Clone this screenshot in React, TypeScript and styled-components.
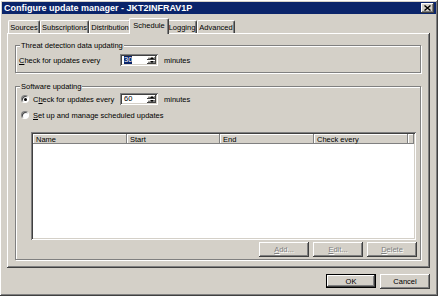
import React from "react";
import styled, { createGlobalStyle } from "styled-components";

const Global = createGlobalStyle`
  html, body { margin: 0; padding: 0; background: #d4d0c8; }
  body { font-family: "Liberation Sans", Arial, sans-serif; font-size: 7.5px; color: #000; }
`;

const raised = `
  box-shadow: inset -1px -1px 0 #404040, inset 1px 1px 0 #ffffff,
    inset -2px -2px 0 #808080, inset 2px 2px 0 #d4d0c8;
`;
const sunken = `
  box-shadow: inset 1px 1px 0 #808080, inset -1px -1px 0 #ffffff,
    inset 2px 2px 0 #404040, inset -2px -2px 0 #d4d0c8;
`;

const Window = styled.div`
  width: 438px;
  height: 296px;
  box-sizing: border-box;
  padding: 2px;
  background: #d4d0c8;
  display: flex;
  flex-direction: column;
  ${raised}
`;

const TitleBar = styled.div`
  height: 12px;
  background: #0a246a;
  display: flex;
  align-items: center;
  justify-content: space-between;
  padding: 0 2px 0 2px;
`;

const Title = styled.span`
  color: #fff;
  font-weight: bold;
  font-size: 9px;
  letter-spacing: 0px;
  white-space: nowrap;
`;

const CloseBox = styled.div`
  width: 13px;
  height: 10px;
  background: #d4d0c8;
  display: flex;
  align-items: center;
  justify-content: center;
  ${raised}
`;

const Body = styled.div`
  flex: 1;
  display: flex;
  flex-direction: column;
  padding: 4px 6px 0 5px;
`;

const TabStrip = styled.div`
  display: flex;
  height: 15px;
  padding-left: 1px;
  position: relative;
  z-index: 1;
`;

const Tab = styled.div<{ $w: number; $active?: boolean }>`
  width: ${(p) => p.$w}px;
  box-sizing: border-box;
  height: ${(p) => (p.$active ? 16 : 13)}px;
  margin-top: ${(p) => (p.$active ? 0 : 2)}px;
  margin-left: ${(p) => (p.$active ? -2 : 0)}px;
  margin-right: ${(p) => (p.$active ? -2 : 0)}px;
  background: #d4d0c8;
  border-top: 1px solid #fff;
  border-left: 1px solid #fff;
  border-right: 1px solid #404040;
  box-shadow: inset -1px 0 0 #808080;
  border-radius: 2px 2px 0 0;
  display: flex;
  align-items: center;
  justify-content: center;
  padding-bottom: ${(p) => (p.$active ? 2 : 0)}px;
  white-space: nowrap;
  position: relative;
  z-index: ${(p) => (p.$active ? 2 : 1)};
`;

const Panel = styled.div`
  height: 235px;
  box-sizing: border-box;
  ${raised}
  padding: 12px 8px 0 8px;
  display: flex;
  flex-direction: column;
  gap: 13px;
`;

const Group = styled.div<{ $h: number }>`
  position: relative;
  height: ${(p) => p.$h}px;
  box-sizing: border-box;
  border: 1px solid #808080;
  box-shadow: 1px 1px 0 #fff, inset 1px 1px 0 #fff;
  margin-right: 1px;
  display: flex;
  flex-direction: column;
`;

const GroupLabel = styled.span`
  position: absolute;
  top: -5px;
  left: 4px;
  padding: 0 1px;
  background: #d4d0c8;
  line-height: 9px;
`;

const Row = styled.div<{ $top: number; $left: number }>`
  display: flex;
  align-items: center;
  height: 12px;
  margin-top: ${(p) => p.$top}px;
  padding-left: ${(p) => p.$left}px;
`;

const FieldLabel = styled.span<{ $w: number }>`
  width: ${(p) => p.$w}px;
  white-space: nowrap;
`;

const Radio = styled.span<{ $on?: boolean }>`
  width: 8px;
  height: 8px;
  border-radius: 50%;
  box-sizing: border-box;
  background: #fff;
  border-top: 1px solid #808080;
  border-left: 1px solid #808080;
  border-right: 1px solid #fff;
  border-bottom: 1px solid #fff;
  box-shadow: inset 1px 1px 0 #404040;
  margin-right: 4px;
  display: flex;
  align-items: center;
  justify-content: center;
  &::after {
    content: "";
    display: ${(p) => (p.$on ? "block" : "none")};
    width: 3px;
    height: 3px;
    border-radius: 50%;
    background: #000;
  }
`;

const Spin = styled.div`
  display: flex;
  width: 38px;
  height: 12px;
  box-sizing: border-box;
  background: #fff;
  ${sunken}
  padding: 2px;
`;

const SpinText = styled.div`
  flex: 1;
  display: flex;
  align-items: center;
  padding-left: 2px;
`;

const Sel = styled.span<{ $sel?: boolean }>`
  background: ${(p) => (p.$sel ? "#0a246a" : "transparent")};
  color: ${(p) => (p.$sel ? "#fff" : "#000")};
  line-height: 8px;
`;

const SpinButtons = styled.div`
  width: 9px;
  display: flex;
  flex-direction: column;
`;

const SpinBtn = styled.div`
  flex: 1;
  background: #d4d0c8;
  ${raised}
  display: flex;
  align-items: center;
  justify-content: center;
`;

const Arrow = styled.span<{ $up?: boolean }>`
  width: 0;
  height: 0;
  border-left: 2px solid transparent;
  border-right: 2px solid transparent;
  ${(p) => (p.$up ? "border-bottom: 2px solid #000;" : "border-top: 2px solid #000;")}
`;

const Unit = styled.span`
  margin-left: 6px;
`;

const List = styled.div`
  margin: 11px 4px 0 15px;
  height: 108px;
  box-sizing: border-box;
  background: #fff;
  ${sunken}
  padding: 2px;
  display: flex;
  flex-direction: column;
`;

const HeaderRow = styled.div`
  display: flex;
  height: 10px;
`;

const HeaderCell = styled.div<{ $w?: number }>`
  ${(p) => (p.$w ? `width: ${p.$w}px;` : "flex: 1;")}
  box-sizing: border-box;
  background: #d4d0c8;
  box-shadow: inset -1px -1px 0 #808080, inset 1px 1px 0 #fff;
  padding-left: 3px;
  display: flex;
  align-items: center;
  white-space: nowrap;
`;

const ButtonRow = styled.div<{ $top: number; $right: number }>`
  display: flex;
  justify-content: flex-end;
  gap: 4px;
  margin-top: ${(p) => p.$top}px;
  margin-right: ${(p) => p.$right}px;
`;

const Button = styled.div<{ $disabled?: boolean; $default?: boolean }>`
  width: 50px;
  height: ${(p) => (p.$default ? 14 : 15)}px;
  box-sizing: border-box;
  background: #d4d0c8;
  display: flex;
  align-items: center;
  justify-content: center;
  color: ${(p) => (p.$disabled ? "#808080" : "#000")};
  text-shadow: ${(p) => (p.$disabled ? "1px 1px 0 #fff" : "none")};
  ${(p) => (p.$default ? "border: 1px solid #000;" : "")}
  ${raised}
`;

const U = styled.span`
  text-decoration: underline;
`;

export default function App() {
  return (
    <>
      <Global />
      <Window>
        <TitleBar>
          <Title>Configure update manager - JKT2INFRAV1P</Title>
          <CloseBox>
            <svg width="7" height="6" viewBox="0 0 7 6">
              <path d="M0.5 0.5 L6.5 5.5 M6.5 0.5 L0.5 5.5" stroke="#000" strokeWidth="1.4" />
            </svg>
          </CloseBox>
        </TitleBar>
        <Body>
          <TabStrip>
            <Tab $w={32}>Sources</Tab>
            <Tab $w={49}>Subscriptions</Tab>
            <Tab $w={42}>Distribution</Tab>
            <Tab $w={40} $active>Schedule</Tab>
            <Tab $w={30}>Logging</Tab>
            <Tab $w={38}>Advanced</Tab>
          </TabStrip>
          <Panel>
            <Group $h={28}>
              <GroupLabel>Threat detection data updating</GroupLabel>
              <Row $top={8} $left={3}>
                <FieldLabel $w={101}>
                  <U>C</U>heck for updates every
                </FieldLabel>
                <Spin>
                  <SpinText>
                    <Sel $sel>30</Sel>
                  </SpinText>
                  <SpinButtons>
                    <SpinBtn><Arrow $up /></SpinBtn>
                    <SpinBtn><Arrow /></SpinBtn>
                  </SpinButtons>
                </Spin>
                <Unit>minutes</Unit>
              </Row>
            </Group>
            <Group $h={174}>
              <GroupLabel>Software updating</GroupLabel>
              <Row $top={6} $left={5}>
                <Radio $on />
                <FieldLabel $w={87}>
                  C<U>h</U>eck for updates every
                </FieldLabel>
                <Spin>
                  <SpinText>
                    <Sel>60</Sel>
                  </SpinText>
                  <SpinButtons>
                    <SpinBtn><Arrow $up /></SpinBtn>
                    <SpinBtn><Arrow /></SpinBtn>
                  </SpinButtons>
                </Spin>
                <Unit>minutes</Unit>
              </Row>
              <Row $top={4} $left={5}>
                <Radio />
                <FieldLabel $w={200}>
                  <U>S</U>et up and manage scheduled updates
                </FieldLabel>
              </Row>
              <List>
                <HeaderRow>
                  <HeaderCell $w={94}>Name</HeaderCell>
                  <HeaderCell $w={93}>Start</HeaderCell>
                  <HeaderCell $w={94}>End</HeaderCell>
                  <HeaderCell $w={94}>Check every</HeaderCell>
                  <HeaderCell />
                </HeaderRow>
              </List>
              <ButtonRow $top={2} $right={3}>
                <Button $disabled>
                  <U>A</U>dd...
                </Button>
                <Button $disabled>
                  <U>E</U>dit...
                </Button>
                <Button $disabled>
                  <U>D</U>elete
                </Button>
              </ButtonRow>
            </Group>
          </Panel>
          <ButtonRow $top={6} $right={0}>
            <Button $default>OK</Button>
            <Button>Cancel</Button>
          </ButtonRow>
        </Body>
      </Window>
    </>
  );
}
